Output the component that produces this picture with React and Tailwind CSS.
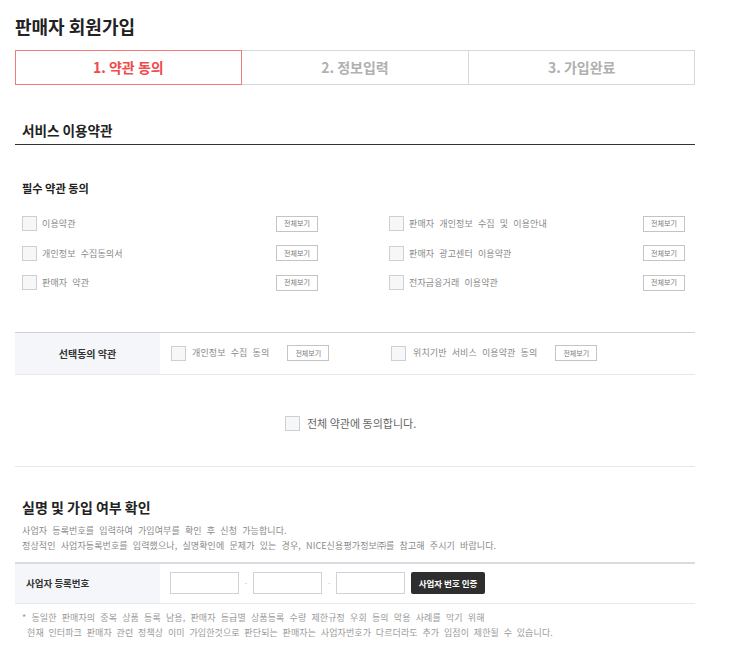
import React from "react";

const FONT = { fontFamily: '"Noto Sans CJK KR", "Noto Sans", sans-serif' };

function Box({ className = "" }) {
  return <span className={"block w-[15px] h-[15px] border border-[#cfcfcf] bg-[#f6f7f9] shrink-0 " + className} />;
}

function ViewBtn() {
  return (
    <span className="flex items-center justify-center w-[42px] h-[16px] border border-[#c4c4c4] bg-white text-[7px] text-[#777] leading-none shrink-0">
      전체보기
    </span>
  );
}

function TermRow({ label }) {
  return (
    <div className="flex items-center justify-between w-[296px]">
      <div className="flex items-center">
        <Box />
        <span className="ml-[5px] text-[9px] [word-spacing:3px] tracking-[0.1px] text-[#8a8a8a]">{label}</span>
      </div>
      <ViewBtn />
    </div>
  );
}

export default function App() {
  const left = ["이용약관", "개인정보 수집동의서", "판매자 약관"];
  const right = ["판매자 개인정보 수집 및 이용안내", "판매자 광고센터 이용약관", "전자금융거래 이용약관"];
  return (
    <div style={FONT} className="w-[750px] h-[650px] bg-white overflow-hidden">
      <div className="ml-[15px] w-[680px]">
        <div className="pt-[15px] text-[18px] leading-[22px] font-bold text-[#222]">판매자 회원가입</div>

        <div className="mt-[13px] grid grid-cols-3 h-[35px]">
          <div className="flex items-center justify-center border border-[#f07b7b] text-[14px] font-bold text-[#f04a4a]">1. 약관 동의</div>
          <div className="flex items-center justify-center border-y border-[#d5d8dd] text-[14px] font-bold text-[#b0b0b0]">2. 정보입력</div>
          <div className="flex items-center justify-center border border-[#d5d8dd] text-[14px] font-bold text-[#b0b0b0]">3. 가입완료</div>
        </div>

        <div className="pt-[35px] pb-[4px] border-b border-[#333]">
          <div className="pl-[7px] text-[13.6px] leading-[20px] font-semibold text-[#222]">서비스 이용약관</div>
        </div>

        <div className="mt-[35px] pl-[7px] text-[11.2px] leading-[16px] font-bold text-[#222]">필수 약관 동의</div>

        <div className="mt-[13px] pl-[7px] flex gap-[71px]">
          <div className="flex flex-col">
            {left.map((l) => (
              <div key={l} className="h-[29.5px] flex items-center">
                <TermRow label={l} />
              </div>
            ))}
          </div>
          <div className="flex flex-col">
            {right.map((l) => (
              <div key={l} className="h-[29.5px] flex items-center">
                <TermRow label={l} />
              </div>
            ))}
          </div>
        </div>

        <div className="mt-[34px] flex h-[43px] border-t border-b border-t-[#cfd3d9] border-b-[#e6e8eb]">
          <div className="w-[145px] bg-[#f5f6f9] flex items-center justify-center text-[10px] font-bold text-[#333]">선택동의 약관</div>
          <div className="flex items-center pl-[11px]">
            <div className="flex items-center w-[220px]">
              <Box />
              <span className="ml-[6px] text-[9px] [word-spacing:3px] tracking-[0.1px] text-[#8a8a8a]">개인정보 수집 동의</span>
              <span className="ml-[18px]"><ViewBtn /></span>
            </div>
            <div className="flex items-center">
              <Box />
              <span className="ml-[7px] text-[9px] [word-spacing:3px] tracking-[0.1px] text-[#8a8a8a]">위치기반 서비스 이용약관 동의</span>
              <span className="ml-[18px]"><ViewBtn /></span>
            </div>
          </div>
        </div>

        <div className="h-[92px] border-b border-[#e6e8eb] flex items-center pt-[6px] pl-[270px]">
          <Box />
          <span className="ml-[7px] text-[11px] text-[#666]">전체 약관에 동의합니다.</span>
        </div>

        <div className="mt-[30px] pl-[7px] text-[14px] leading-[20px] font-bold text-[#222]">실명 및 가입 여부 확인</div>
        <div className="mt-[6px] pl-[7px] text-[9px] leading-[15px] [word-spacing:3px] tracking-[0.1px] text-[#8a8a8a]">
          <div>사업자 등록번호를 입력하여 가입여부를 확인 후 신청 가능합니다.</div>
          <div>정상적인 사업자등록번호를 입력했으나, 실명확인에 문제가 있는 경우, NICE신용평가정보㈜를 참고해 주시기 바랍니다.</div>
        </div>

        <div className="mt-[9px] flex h-[42px] border-t-2 border-b border-t-[#d8dbe0] border-b-[#e6e8eb]">
          <div className="w-[145px] bg-[#f5f6f9] flex items-center pl-[11px] text-[9.5px] font-bold text-[#333]">사업자 등록번호</div>
          <div className="flex items-center pl-[10px]">
            <span className="block w-[69px] h-[22px] border border-[#cfd3d9] bg-white" />
            <span className="w-[14px] text-center text-[8px] text-[#ccc]">-</span>
            <span className="block w-[69px] h-[22px] border border-[#cfd3d9] bg-white" />
            <span className="w-[14px] text-center text-[8px] text-[#ccc]">-</span>
            <span className="block w-[69px] h-[22px] border border-[#cfd3d9] bg-white" />
            <span className="ml-[6px] flex items-center justify-center w-[74px] h-[22px] rounded-[2px] bg-[#2e2e2e] text-white text-[8.5px] font-bold">사업자 번호 인증</span>
          </div>
        </div>

        <div className="mt-[6px] pl-[7px] text-[9px] leading-[15px] [word-spacing:3px] tracking-[0.1px] text-[#9a9a9a]">
          <div>* 동일한 판매자의 중복 상품 등록 남용, 판매자 등급별 상품등록 수량 제한규정 우회 등의 악용 사례를 막기 위해</div>
          <div className="pl-[5px] [word-spacing:2.6px]">현재 인터파크 판매자 관련 정책상 이미 가입한것으로 판단되는 판매자는 사업자번호가 다르더라도 추가 입점이 제한될 수 있습니다.</div>
        </div>
      </div>
    </div>
  );
}
